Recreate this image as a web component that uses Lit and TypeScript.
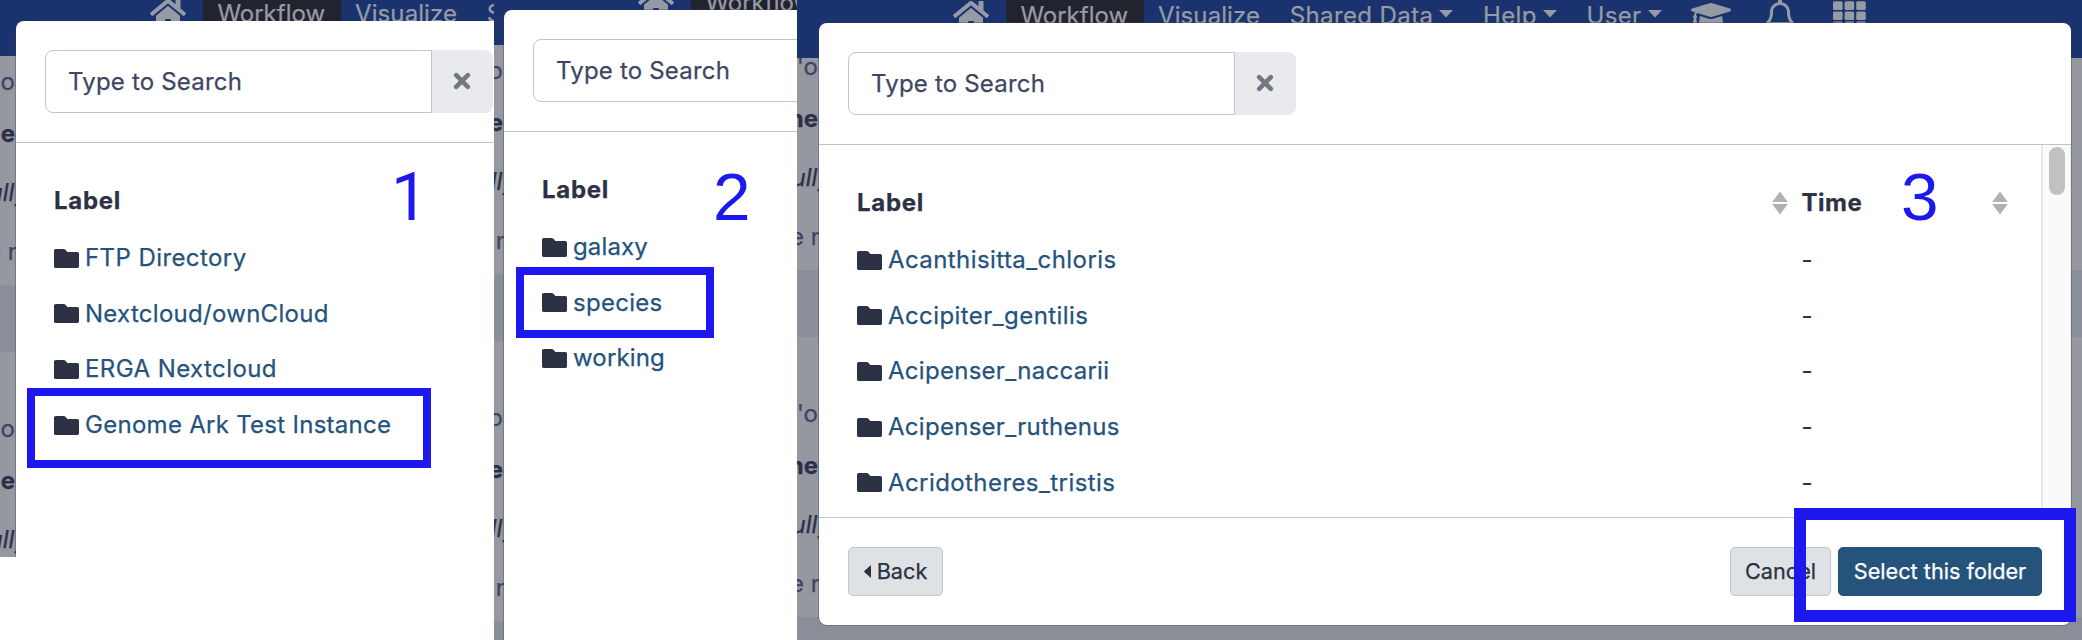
import { LitElement, html, css, svg } from "lit";
import { customElement, property } from "lit/decorators.js";

type Row = [label: string, tracking: string];

const folderIcon = html`<svg class="folder" viewBox="0 0 25 19" width="25" height="19">
  <path d="M1.8 0H9.6C10.3 0 10.8.2 11.2.6L13.4 2.9H23.2C24.2 2.9 25 3.7 25 4.7V17.2C25 18.2 24.2 19 23.2 19H1.8C.8 19 0 18.2 0 17.2V1.8C0 .8.8 0 1.8 0Z" fill="currentColor"/>
</svg>`;

const homeIcon = html`<svg viewBox="0 0 576 512" width="36" height="32"><path fill="currentColor" d="M280.37 148.26L96 300.11V464a16 16 0 0 0 16 16l112.06-.29a16 16 0 0 0 15.92-16V368a16 16 0 0 1 16-16h64a16 16 0 0 1 16 16v95.64a16 16 0 0 0 16 16.05L464 480a16 16 0 0 0 16-16V300L295.67 148.26a12.19 12.19 0 0 0-15.3 0zM571.6 251.47L488 182.56V44.05a12 12 0 0 0-12-12h-56a12 12 0 0 0-12 12v72.61L318.47 43a48 48 0 0 0-61 0L4.34 251.47a12 12 0 0 0-1.6 16.9l25.5 31A12 12 0 0 0 45.15 301l235.22-193.74a12.19 12.19 0 0 1 15.3 0L530.9 301a12 12 0 0 0 16.9-1.6l25.5-31a12 12 0 0 0-1.7-16.93z"/></svg>`;

const capIcon = html`<svg viewBox="0 0 640 512" width="40" height="32"><path fill="currentColor" d="M622.34 153.2L343.4 67.5c-15.2-4.67-31.6-4.67-46.79 0L17.66 153.2c-23.54 7.23-23.54 38.36 0 45.59l48.63 14.94c-10.67 13.19-17.23 29.28-17.88 46.9C38.78 266.15 32 276.11 32 288c0 10.78 5.68 19.85 13.86 25.65L20.33 428.53C18.11 438.52 25.71 448 35.94 448h56.11c10.24 0 17.84-9.48 15.62-19.47L82.14 313.65C90.32 307.85 96 298.78 96 288c0-11.57-6.47-21.25-15.66-26.87.76-15.02 8.44-28.3 20.69-36.72L296.6 284.5c9.06 2.78 26.44 6.25 46.79 0l278.95-85.7c23.55-7.24 23.55-38.36 0-45.6zM352.79 315.09c-28.53 8.76-52.84 3.92-65.59 0l-145.02-44.55L128 384c0 35.35 85.96 64 192 64s192-28.65 192-64l-14.18-113.47-145.03 44.56z"/></svg>`;

const bellIcon = html`<svg viewBox="0 0 448 512" width="28" height="32"><path fill="currentColor" d="M439.39 362.29c-19.32-20.76-55.47-51.99-55.47-154.29 0-77.7-54.48-139.9-127.94-155.16V32c0-17.67-14.32-32-31.98-32s-31.98 14.33-31.98 32v20.84C118.56 68.1 64.08 130.3 64.08 208c0 102.3-36.15 133.53-55.47 154.29-6 6.45-8.66 14.16-8.61 21.71.11 16.4 12.98 32 32.1 32h383.8c19.12 0 32-15.6 32.1-32 .05-7.55-2.61-15.27-8.61-21.71zM67.53 368c21.22-27.97 44.42-74.33 44.53-159.42 0-.2-.06-.38-.06-.58 0-61.86 50.14-112 112-112s112 50.14 112 112c0 .2-.06.38-.06.58.11 85.1 23.31 131.46 44.53 159.42H67.53zM224 512c35.32 0 63.97-28.65 63.97-64H160.03c0 35.35 28.63 64 63.97 64z"/></svg>`;

const gridIcon = html`<svg viewBox="0 0 33 32" width="33" height="32">
  ${[0, 11.6, 23.2].map((x) => [2.3, 12.5, 22.5].map((y) => svg`<rect x=${x} y=${y} width="9.6" height="8.6" rx="1.5" fill="currentColor"/>`))}
</svg>`;

const caret = html`<svg class="caret" viewBox="0 0 14 8" width="14" height="8"><path d="M0 0H14L7 7.5Z" fill="currentColor"/></svg>`;

const sortIcon = html`<svg class="sort" viewBox="0 0 16 24" width="16" height="24">
  <path d="M8 0.4L15.8 11H.2ZM.2 13H15.8L8 23.6Z" fill="#b1b1b1"/>
</svg>`;

@customElement("page-backdrop")
export class PageBackdrop extends LitElement {
  @property({ type: Boolean }) full = false;

  static styles = css`
    :host { display: flex; flex-direction: column; height: 100%; overflow: hidden;
      background: #9597a1; font: 400 24px "Inter", sans-serif; color: #3f4361; -webkit-text-stroke: .25px currentColor; }
    .nav { flex: none; height: var(--nav-h); display: flex; align-items: flex-end; overflow: hidden;
      position: relative; z-index: 1; background: #1a326d; color: #969aa5; }
    .bar { flex: none; display: flex; align-items: center; height: 86px; white-space: nowrap;
      padding-left: calc(var(--modal-x) + 134px); }
    .bar svg { flex: none; display: block; }
    .tab { flex: none; box-sizing: border-box; display: flex; align-items: center; justify-content: center;
      width: 138px; height: 86px; margin-left: 17px; padding-right: 1.5px; background: #21232f; }
    .link { flex: none; display: flex; align-items: center; gap: 6px; margin-left: 29.5px; letter-spacing: .4px; }
    .link.first { margin-left: 14px; letter-spacing: .1px; }
    .caret { margin-top: -3px; }
    .cap { margin-left: 29px; }
    .bell { margin-left: 35px; }
    .grid { margin-left: 39px; }
    .gutter { width: var(--modal-x); margin-top: var(--scroll, 0px); overflow: hidden; }
    .section { padding-top: 6px; }
    .line { display: flex; justify-content: flex-end; line-height: 40px; white-space: nowrap; }
    .l1 { height: 52px; padding-right: 1px; }
    .l2 { height: 59px; padding-right: 1px; font-weight: 700; color: #2c3046; }
    .l3 { height: 59px; margin-right: -12px; font-style: italic; color: #2c3046; }
    .l4 { height: 53px; margin-right: -6px; }
    .band { height: 67px; margin-bottom: 51px; background: #8a8e99; }
  `;

  render() {
    const section = html`<div class="section">
      <div class="line l1">'o</div>
      <div class="line l2">he</div>
      <div class="line l3">ully</div>
      <div class="line l4">e n</div>
    </div>
    <div class="band"></div>`;
    return html`
      <div class="nav"><div class="bar">
        ${homeIcon}
        <div class="tab">Workflow</div>
        <div class="link first">Visualize</div>
        <div class="link">Shared Data ${caret}</div>
        ${this.full ? html`
          <div class="link">Help ${caret}</div>
          <div class="link">User ${caret}</div>
          <div class="cap">${capIcon}</div>
          <div class="bell">${bellIcon}</div>
          <div class="grid">${gridIcon}</div>` : null}
      </div></div>
      <div class="gutter">${section}${section}</div>
    `;
  }
}

@customElement("file-dialog")
export class FileDialog extends LitElement {
  @property({ attribute: false }) rows: Row[] = [];
  @property({ type: Boolean }) full = false;

  static styles = css`
    :host { display: flex; flex-direction: column; overflow: hidden; background: #fff;
      font: 400 24px/30px "Inter", sans-serif; color: #2c3143; -webkit-text-stroke: .25px currentColor; }
    .head { flex: none; display: flex; padding: 29px; border-bottom: 1px solid #bdc5d1; }
    .search { flex: none; box-sizing: border-box; width: 387px; height: 63px; display: flex; align-items: center;
      padding-left: 22px; border: 1px solid #bdc5d1; border-radius: 8px 0 0 8px; color: #3f4663; letter-spacing: .2px; }
    .clear { flex: none; box-sizing: border-box; width: 61px; height: 63px; display: flex; align-items: center; justify-content: center;
      padding: 0 2px 2px 0; background: #e9eaed; border-radius: 0 8px 8px 0; color: #747783; }
    .body { flex: 1; min-height: 0; display: flex; overflow: hidden; }
    .table { flex: 1; padding: 28.5px 33px 0 38px; }
    .row { display: grid; grid-template-columns: 944.5px 1fr; align-items: center; height: 55.6px; }
    .th { height: 59px; font-weight: 700; }
    .th .cell { letter-spacing: .7px; padding-right: 13.5px; justify-content: space-between; }
    .th .cell:last-child:not(:first-child) { padding-right: 0; letter-spacing: .5px; }
    .cell { display: flex; align-items: center; white-space: nowrap; }
    .folder { flex: none; margin-right: 6px; }
    .name { color: #25537b; letter-spacing: .28px; }
    .tight { letter-spacing: .15px; }
    .wide { letter-spacing: .42px; }
    .track { flex: none; box-sizing: border-box; width: 30px; border-left: 2px solid #e8e8e8;
      border-right: 1px solid #ededed; background: #fafafa; padding: 2px 5px 2px 6px; }
    .thumb { height: 48px; border-radius: 8px; background: #c1c1c1; }
    .foot { flex: none; display: flex; gap: 7px; padding: 29px; border-top: 1px solid #bdc5d1; }
    .btn { box-sizing: border-box; height: 49px; display: flex; align-items: center; justify-content: center;
      padding-bottom: 1px; border: 1px solid #bdc7d1; border-radius: 5px; background: #dee2e5; font-size: 21.7px; white-space: nowrap; }
    .back { width: 95px; gap: 6px; margin-right: auto; }
    .cancel { width: 101px; }
    .primary { width: 204px; background: #25537b; border-color: #25537b; color: #fff; }
  `;

  render() {
    return html`
      <div class="head">
        <div class="search">Type to Search</div>
        <div class="clear"><svg viewBox="0 0 18 18" width="18" height="18"><path d="M3.2 3.2L14.8 14.8M14.8 3.2L3.2 14.8" stroke="currentColor" stroke-width="4.6" stroke-linecap="round"/></svg></div>
      </div>
      <div class="body">
        <div class="table">
          <div class="row th">
            <div class="cell">Label ${this.full ? sortIcon : null}</div>
            ${this.full ? html`<div class="cell">Time ${sortIcon}</div>` : null}
          </div>
          ${this.rows.map(([label, tracking]) => html`<div class="row">
            <div class="cell">${folderIcon}<span class="name ${tracking}">${label}</span></div>
            ${this.full ? html`<div class="cell">-</div>` : null}
          </div>`)}
        </div>
        ${this.full ? html`<div class="track"><div class="thumb"></div></div>` : null}
      </div>
      ${this.full ? html`<div class="foot">
        <div class="btn back"><svg viewBox="0 0 7 13" width="7" height="13"><path d="M7 .8V12.2Q7 13 6.4 12.5L.3 6.9Q0 6.5 .3 6.1L6.4.5Q7 0 7 .8Z" fill="currentColor"/></svg><span>Back</span></div>
        <div class="btn cancel">Cancel</div>
        <div class="btn primary">Select this folder</div>
      </div>` : null}
    `;
  }
}

@customElement("app-root")
export class AppRoot extends LitElement {
  static styles = css`
    :host { display: grid; grid-template-columns: 494px 303px 1285px; height: 640px; overflow: hidden; background: #fff; }
    .step { position: relative; overflow: hidden; height: 640px; }
    .one { --modal-x: 16px; --nav-h: 56px; }
    .one page-backdrop { height: 557px; }
    .two { --modal-x: 10px; --nav-h: 45px; }
    .three { --modal-x: 22px; --nav-h: 58px; --scroll: -17px; }
    file-dialog { position: absolute; left: var(--modal-x); z-index: 2; border-radius: 8px;
      box-shadow: 0 0 0 1px rgba(60, 62, 75, .35); }
    .one file-dialog { top: 21px; width: 600px; height: 536px; border-radius: 8px 8px 0 0; clip-path: inset(0 0 0 -1px); }
    .two file-dialog { top: 10px; width: 600px; height: 700px; }
    .three file-dialog { top: 23px; width: 1252px; height: 602px; }
    .three page-backdrop { background: linear-gradient(#9597a1 270px, #8a8e99 270px 337px, #9597a1 337px 617px, #8a8e99 617px); }
    .mark { position: absolute; z-index: 3; box-sizing: border-box; border: 8px solid #1d19ee; }
    .one .mark { left: 27px; top: 388px; width: 404px; height: 80px; }
    .two .mark { left: 22px; top: 267px; width: 198px; height: 71px; }
    .three .mark { left: 997px; top: 508px; width: 282px; height: 114px; border-width: 12px; }
    .num { position: absolute; z-index: 3; top: 159px; font: 67.5px/76px "Liberation Sans", sans-serif; color: #1d19ee; }
    .one .num { left: 391px; top: 160px; font-family: "Roboto", sans-serif; font-size: 66px; }
    .two .num { left: 219px; }
    .three .num { left: 1104px; }
  `;

  private first: Row[] = [["FTP Directory", "wide"], ["Nextcloud/ownCloud", ""], ["ERGA Nextcloud", "wide"], ["Genome Ark Test Instance", ""]];
  private second: Row[] = [["galaxy", "tight"], ["species", ""], ["working", "tight"]];
  private third: Row[] = [["Acanthisitta_chloris", "wide"], ["Accipiter_gentilis", "wide"], ["Acipenser_naccarii", ""], ["Acipenser_ruthenus", ""], ["Acridotheres_tristis", "wide"]];

  render() {
    return html`
      <section class="step one">
        <page-backdrop></page-backdrop>
        <file-dialog .rows=${this.first}></file-dialog>
        <div class="mark"></div><div class="num">1</div>
      </section>
      <section class="step two">
        <page-backdrop></page-backdrop>
        <file-dialog .rows=${this.second}></file-dialog>
        <div class="mark"></div><div class="num">2</div>
      </section>
      <section class="step three">
        <page-backdrop full></page-backdrop>
        <file-dialog full .rows=${this.third}></file-dialog>
        <div class="mark"></div><div class="num">3</div>
      </section>
    `;
  }
}
